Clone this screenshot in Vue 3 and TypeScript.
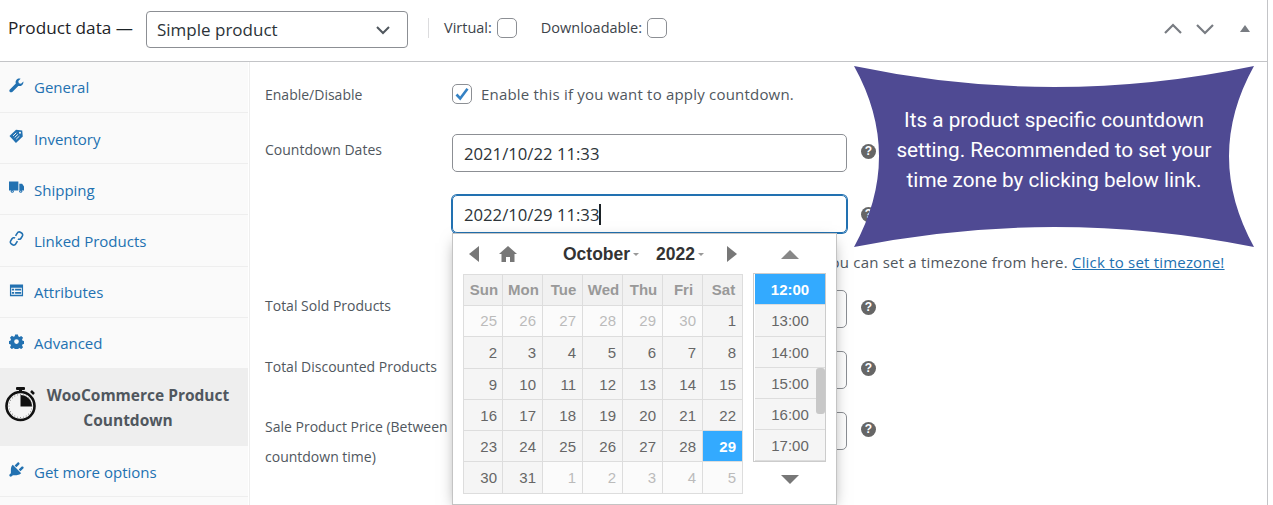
<script setup lang="ts">
const tabsTop = [
  { name: 'General', icon: 'wrench' },
  { name: 'Inventory', icon: 'tag' },
  { name: 'Shipping', icon: 'truck' },
  { name: 'Linked Products', icon: 'link' },
  { name: 'Attributes', icon: 'list' },
  { name: 'Advanced', icon: 'gear' },
]
const heads = ['Sun', 'Mon', 'Tue', 'Wed', 'Thu', 'Fri', 'Sat']
type Day = { d: number; muted?: boolean; on?: boolean }
const days: Day[] = [
  ...[25, 26, 27, 28, 29, 30].map((d) => ({ d, muted: true })),
  { d: 1 },
  ...Array.from({ length: 27 }, (_, i) => ({ d: i + 2 })),
  { d: 29, on: true },
  { d: 30 },
  { d: 31 },
  ...[1, 2, 3, 4, 5].map((d) => ({ d, muted: true })),
]
const times = ['12:00', '13:00', '14:00', '15:00', '16:00', '17:00']
const ticks = Array.from({ length: 24 }, (_, i) => i * 15)
</script>

<template>
  <div class="box">
    <header class="head">
      <span class="title">Product data —</span>
      <div class="select">
        <span>Simple product</span>
        <svg width="16" height="10" viewBox="0 0 16 10"><path d="M2 2l6 6 6-6" fill="none" stroke="#50575e" stroke-width="2" /></svg>
      </div>
      <span class="sep"></span>
      <label class="opt">Virtual: <i class="cb"></i></label>
      <label class="opt second">Downloadable: <i class="cb"></i></label>
      <div class="arrows">
        <svg width="20" height="12" viewBox="0 0 20 12"><path d="M2 10l8-8 8 8" fill="none" stroke="#787c82" stroke-width="2.2" /></svg>
        <svg width="20" height="12" viewBox="0 0 20 12"><path d="M2 2l8 8 8-8" fill="none" stroke="#787c82" stroke-width="2.2" /></svg>
        <svg class="tri" width="12" height="8" viewBox="0 0 12 8"><path d="M1 8l5-7 5 7z" fill="#787c82" /></svg>
      </div>
    </header>

    <div class="body">
      <nav class="side">
        <a v-for="t in tabsTop" :key="t.name" class="tab">
          <svg class="ti" width="15" height="15" viewBox="0 0 16 16" fill="#2271b1">
            <path v-if="t.icon === 'wrench'" d="M15.4 3.6l-2.6 2.5-2.3-.6-.6-2.3L12.4.7C10.8.2 9 .6 8 1.8 7 3 6.800 4.500 7.300 5.800L.9 12.200c-.7.700-.7 1.900 0 2.600.7.700 1.900.7 2.600 0l6.400-6.400c1.300.5 2.800.2 3.900-.8 1.200-1.100 1.700-2.800 1.600-4z" />
            <template v-else-if="t.icon === 'tag'">
              <path d="M7.500.8L.5 7.500 7.400 15l7.300-7-.6-6.400z" />
              <circle cx="11.700" cy="3.900" r="1.100" fill="#fafafa" />
              <path d="M4.300 7.300l3.400-3.200M6 9l3.400-3.200M7.700 10.800l3.400-3.200" stroke="#fafafa" stroke-width="1" />
            </template>
            <template v-else-if="t.icon === 'truck'">
              <path d="M0 1.500h10v9.800H0zM11 4h3l2 3v4.300h-5z" />
              <circle cx="3.500" cy="12" r="1.600" /><circle cx="12.500" cy="12" r="1.600" />
              <circle cx="3.500" cy="12" r=".6" fill="#fafafa" /><circle cx="12.500" cy="12" r=".6" fill="#fafafa" />
            </template>
            <g v-else-if="t.icon === 'link'" fill="none" stroke="#2271b1" stroke-width="1.700">
              <path d="M7 5.200l1.800-3a2.400 2.400 0 0 1 3.300-.9l1.300.8a2.400 2.400 0 0 1 .8 3.300l-1.400 2.300a2.400 2.400 0 0 1-3.300.8" />
              <path d="M9 10.800l-1.800 3a2.400 2.400 0 0 1-3.300.9l-1.300-.8a2.400 2.400 0 0 1-.8-3.300l1.400-2.300a2.400 2.400 0 0 1 3.300-.8" />
            </g>
            <template v-else-if="t.icon === 'list'">
              <path fill-rule="evenodd" d="M1 1.500h14v12.500H1zM2.300 5v7.600h11.400V5z" />
              <path d="M3 6h2.500v2H3zM3 9.500h2.500v2H3zM6.500 6h6.500v2H6.500zM6.500 9.500h6.500v2H6.500z" />
            </template>
            <path v-else fill-rule="evenodd" d="M6.500.5h3l.4 2 1.300.6 1.800-1.100 2 2.100-1.100 1.700.6 1.400 2 .4v2.900l-2 .4-.6 1.400 1.100 1.700-2 2.100-1.800-1.100-1.300.6-.4 2h-3l-.4-2-1.300-.6-1.800 1.100-2-2.100 1.100-1.700-.6-1.400-2-.4V7.500l2-.4.6-1.400L1 4l2-2.100 1.800 1.100 1.300-.6zM8 5.600a2.500 2.500 0 1 0 0 5 2.500 2.500 0 0 0 0-5z" />
          </svg>
          <span>{{ t.name }}</span>
        </a>
        <a class="tab active">
          <svg class="timer" width="34" height="36" viewBox="0 0 34 36">
            <rect x="12" y="1" width="9" height="3" rx="1" fill="#111" />
            <rect x="15" y="3" width="3" height="4" fill="#111" />
            <path d="M27 5l3 3" stroke="#111" stroke-width="2.500" />
            <circle cx="16.500" cy="20" r="14" fill="#f4f4f4" stroke="#111" stroke-width="2.600" />
            <path d="M16.500 9v11.500H28A11.500 11.500 0 0 0 16.500 9z" fill="#111" />
            <circle v-for="a in ticks" :key="a" cx="16.500" cy="8.500" r=".5" fill="#777" :transform="`rotate(${a} 16.500 20)`" />
          </svg>
          <strong><span class="l1">WooCommerce Product</span><span class="l2">Countdown</span></strong>
        </a>
        <a class="tab">
          <svg class="ti plug" width="15" height="15" viewBox="2 2 16 16" fill="#2271b1">
            <path d="M13.110 4.360L9.870 7.600 8 5.730l3.240-3.240c.35-.34 1.050-.2 1.560.32.520.510.660 1.210.310 1.550zm-8 1.770l.91-1.120 9.010 9.010-1.190.84c-.710.710-2.630 1.160-3.820 1.160H6.140L4.900 17.260c-.59.590-1.540.59-2.120 0-.59-.58-.59-1.530 0-2.120l1.240-1.240v-3.880c0-1.130.4-3.150 1.090-3.890zm7.260 3.970l3.240-3.240c.34-.35 1.040-.21 1.550.31.520.51.660 1.210.310 1.560l-3.240 3.250z" />
          </svg>
          <span>Get more options</span>
        </a>
      </nav>

      <main class="form">
        <div class="row first">
          <label class="lab">Enable/Disable</label>
          <div class="ctl">
            <i class="cb checked">
              <svg width="16" height="14" viewBox="0 0 16 14"><path d="M2.500 7.500l3.700 4L13.500 1.800" fill="none" stroke="#3582c4" stroke-width="2.600" /></svg>
            </i>
            <span class="desc">Enable this if you want to apply countdown.</span>
          </div>
        </div>
        <div class="row dates">
          <label class="lab">Countdown Dates</label>
          <div class="ctl">
            <div class="input">2021/10/22 11:33</div>
            <i class="help">?</i>
          </div>
        </div>
        <div class="row second-date">
          <span class="lab"></span>
          <div class="ctl">
            <div class="input focus">2022/10/29 11:33<b class="caret"></b></div>
            <i class="help">?</i>
          </div>
        </div>
        <div class="row note">
          <span class="lab"></span>
          <p>You can set a timezone from here. <a>Click to set timezone!</a></p>
        </div>
        <div class="row total">
          <label class="lab">Total Sold Products</label>
          <div class="ctl"><div class="input"></div><i class="help">?</i></div>
        </div>
        <div class="row total">
          <label class="lab">Total Discounted Products</label>
          <div class="ctl"><div class="input"></div><i class="help">?</i></div>
        </div>
        <div class="row total">
          <label class="lab two">Sale Product Price (Between countdown time)</label>
          <div class="ctl"><div class="input"></div><i class="help">?</i></div>
        </div>
      </main>
    </div>

    <aside class="callout">
      <p>Its a product specific countdown setting. Recommended to set your time zone by clicking below link.</p>
    </aside>

    <section class="picker">
      <div class="cal">
        <div class="nav">
          <svg width="10" height="16" viewBox="0 0 10 16"><path d="M10 0v16L0 8z" fill="#777" /></svg>
          <svg class="home" width="18" height="16" viewBox="0 0 18 16"><path d="M9 0L0 8h2.500v8h4.500v-5h4v5h4.500V8H18z" fill="#777" /></svg>
          <span class="month">October<i class="dn"></i></span>
          <span class="year">2022<i class="dn"></i></span>
          <svg class="next" width="10" height="16" viewBox="0 0 10 16"><path d="M0 0v16l10-8z" fill="#777" /></svg>
        </div>
        <div class="grid">
          <div v-for="h in heads" :key="h" class="cell hd">{{ h }}</div>
          <div v-for="(c, i) in days" :key="i" class="cell" :class="{ muted: c.muted, on: c.on }">{{ c.d }}</div>
        </div>
      </div>
      <div class="time">
        <svg class="up" width="18" height="9" viewBox="0 0 18 9"><path d="M9 0l9 9H0z" fill="#888" /></svg>
        <div class="list">
          <div v-for="(t, i) in times" :key="t" class="tm" :class="{ on: i === 0 }">{{ t }}</div>
          <span class="thumb"></span>
        </div>
        <svg class="down" width="18" height="9" viewBox="0 0 18 9"><path d="M0 0h18L9 9z" fill="#777" /></svg>
      </div>
    </section>
  </div>
</template>

<style scoped>
.box {
  position: relative;
  width: 1267px;
  height: 505px;
  overflow: hidden;
  background: #fff;
  border-right: 1px solid #c3c4c7;
  font-family: 'Open Sans', 'Noto Sans', sans-serif;
  color: #50575e;
  box-sizing: content-box;
}
.head {
  display: flex;
  align-items: center;
  height: 61px;
  padding: 0 8px;
  box-sizing: content-box;
  border-bottom: 1px solid #c3c4c7;
}
.title {
  font-size: 17.200px;
  color: #1d2327;
  width: 138px;
  margin-top: -7px;
  white-space: nowrap;
}
.select {
  display: flex;
  align-items: center;
  justify-content: space-between;
  box-sizing: border-box;
  width: 262px;
  height: 37px;
  border: 1px solid #8c8f94;
  border-radius: 4px;
  padding: 0 16px 0 10px;
  font-size: 17px;
  color: #2c3338;
  margin-top: -2px;
}
.sep {
  width: 1px;
  height: 20px;
  margin: -6px 15px 0 20px;
  background: #dcdcde;
}
.opt {
  display: flex;
  align-items: center;
  gap: 5px;
  font-size: 14.500px;
  color: #3c434a;
  margin-top: -6px;
  white-space: nowrap;
}
.opt.second {
  margin-left: 24px;
}
.cb {
  display: inline-flex;
  align-items: center;
  justify-content: center;
  box-sizing: border-box;
  width: 20px;
  height: 20px;
  border: 1px solid #8c8f94;
  border-radius: 5px;
  background: #fff;
}
.arrows {
  margin-left: auto;
  margin-top: -4px;
  display: flex;
  align-items: center;
  gap: 12px;
  padding-right: 8px;
}
.tri {
  margin-left: 12px;
  margin-top: -1px;
}
.body {
  display: flex;
}
.side {
  box-sizing: border-box;
  width: 250px;
  height: 443px;
  flex: none;
  background: linear-gradient(#fafafa, #fafafa) 0 0 / 248px 100% no-repeat;
  border-right: 1px solid #eee;
}
.tab {
  display: flex;
  align-items: center;
  box-sizing: border-box;
  width: 248px;
  height: 51.200px;
  padding: 1px 8px 0 9px;
  border-bottom: 1px solid #eee;
  font-size: 15px;
  color: #2271b1;
}
.tab:nth-child(1) {
  height: 51px;
  padding-top: 0;
}
.ti {
  flex: none;
  margin: -4px 10px 0 0;
}
.tab.active {
  height: 77px;
  padding: 0 0 0 4px;
  background: #eee;
  border-bottom: 0;
  color: #50575e;
}
.timer {
  flex: none;
  margin-top: -6px;
}
.tab.active strong {
  flex: 1;
  text-align: center;
  font-size: 15.500px;
  line-height: 25px;
  padding: 2px 10px 0 0;
  font-weight: 700;
  white-space: nowrap;
}
.l1,
.l2 {
  display: block;
}
.l2 {
  padding-right: 20px;
}
.form {
  flex: 1;
  padding: 0 0 0 15px;
}
.row {
  display: flex;
}
.lab {
  width: 187px;
  flex: none;
  font-size: 14px;
  color: #50575e;
  white-space: normal;
}
.ctl {
  display: flex;
  align-items: center;
  flex: none;
  align-self: flex-start;
}
.first {
  height: 72px;
  align-items: flex-start;
  padding-top: 21px;
  box-sizing: border-box;
}
.first .lab {
  line-height: 24px;
}
.first .ctl {
  padding-top: 1px;
}
.desc {
  font-size: 15px;
  margin-left: 9px;
  letter-spacing: 0.2px;
}
.dates .lab {
  line-height: 32px;
}
.dates .help,
.total .help {
  margin-top: -4px;
}
.second-date {
  margin-top: 23px;
}
.input {
  display: flex;
  align-items: center;
  box-sizing: border-box;
  width: 395px;
  height: 38px;
  border: 1px solid #8c8f94;
  border-radius: 5px;
  padding: 0 11px;
  font-size: 16.700px;
  color: #2c3338;
}
.input.focus {
  border-color: #2271b1;
  box-shadow: 0 0 0 1px #2271b1;
}
.caret {
  width: 2px;
  height: 21px;
  background: #1d2327;
}
.help {
  display: inline-flex;
  align-items: center;
  justify-content: center;
  width: 15px;
  height: 15px;
  border-radius: 50%;
  margin-left: 14px;
  background: #666;
  color: #fff;
  font: 700 12px/1 'Liberation Sans', sans-serif;
}
.note {
  height: 57px;
  align-items: center;
}
.note p {
  margin: 0;
  padding-left: 370px;
  font-size: 15px;
  color: #50575e;
  letter-spacing: 0.2px;
  white-space: nowrap;
}
.note a {
  color: #2271b1;
  text-decoration: underline;
}
.total {
  height: 61px;
}
.total .lab {
  line-height: 32px;
}
.total .lab.two {
  line-height: 30px;
  width: 190px;
  margin-right: -3px;
}
.callout {
  position: absolute;
  left: 854px;
  top: 66px;
  width: 400px;
  height: 181px;
  box-sizing: border-box;
  padding-bottom: 14px;
  background: #4f4a93;
  clip-path: path('M0 0Q200 42 400 0Q350 90 400 181Q200 141 0 181Q50 90 0 0Z');
  display: flex;
  align-items: center;
  justify-content: center;
}
.callout p {
  margin: 0;
  width: 340px;
  text-align: center;
  font: 400 20.700px/30px Roboto, sans-serif;
  color: #fff;
}
.picker {
  position: absolute;
  left: 452px;
  top: 233px;
  width: 385px;
  height: 272px;
  box-sizing: border-box;
  padding: 0 10px;
  background: #fff;
  border: 1px solid #c4c4c4;
  box-shadow: 0 5px 15px -5px rgba(0, 0, 0, 0.5);
  display: flex;
  gap: 10px;
  font-family: 'Liberation Sans', Arial, sans-serif;
}
.cal {
  width: 280px;
  flex: none;
}
.nav {
  display: flex;
  align-items: center;
  height: 40px;
  color: #333;
  font-weight: 700;
  font-size: 17.500px;
  padding-left: 6px;
}
.home {
  margin-left: 20px;
}
.month {
  margin-left: 46px;
}
.year {
  margin-left: 17px;
}
.next {
  margin-left: 23px;
}
.dn {
  display: inline-block;
  width: 0;
  height: 0;
  margin-left: 3px;
  vertical-align: middle;
  border: 3.500px solid transparent;
  border-top-color: #999;
  border-bottom: 0;
}
.grid {
  display: grid;
  grid-template-columns: repeat(7, 40px);
  grid-template-rows: 31px 31px 32px 31px 31px 31px 32px;
  width: 280px;
  border-top: 1px solid #ddd;
  box-sizing: border-box;
}
.cell {
  display: flex;
  align-items: center;
  justify-content: flex-end;
  box-sizing: border-box;
  padding-right: 6px;
  border-right: 1px solid #ddd;
  border-bottom: 1px solid #ddd;
  background: #f5f5f5;
  color: #666;
  font-size: 15px;
}
.cell:nth-child(-n + 14) {
  padding-bottom: 2px;
}
.cell:nth-child(7n + 1) {
  border-left: 1px solid #ddd;
  padding-right: 5px;
}
.cell.hd {
  justify-content: center;
  padding: 0 0 2px 2px;
  background: #f1f1f1;
  color: #999;
  font-weight: 700;
}
.cell.muted {
  background: #fbfbfb;
  color: #bbb;
}
.cell.on {
  background: #33aaff;
  color: #fff;
  font-weight: 700;
}
.time {
  width: 73px;
  flex: none;
  display: flex;
  flex-direction: column;
  align-items: center;
}
.up {
  margin-top: 16px;
  margin-bottom: 14px;
}
.down {
  margin-top: 13px;
}
.list {
  position: relative;
  width: 73px;
  box-sizing: border-box;
  border: 1px solid #ccc;
  padding-left: 1px;
}
.tm {
  height: 31px;
  display: flex;
  align-items: center;
  justify-content: center;
  width: 70px;
  box-sizing: border-box;
  background: #f5f5f5;
  border-bottom: 1px solid #ddd;
  color: #666;
  font-size: 15px;
}
.tm:nth-child(2) {
  height: 32px;
}
.tm.on {
  background: #33aaff;
  color: #fff;
  font-weight: 700;
}
.thumb {
  position: absolute;
  left: 62px;
  top: 94px;
  width: 9px;
  height: 46px;
  border-radius: 3px;
  background: #c8c8c8;
}
</style>
